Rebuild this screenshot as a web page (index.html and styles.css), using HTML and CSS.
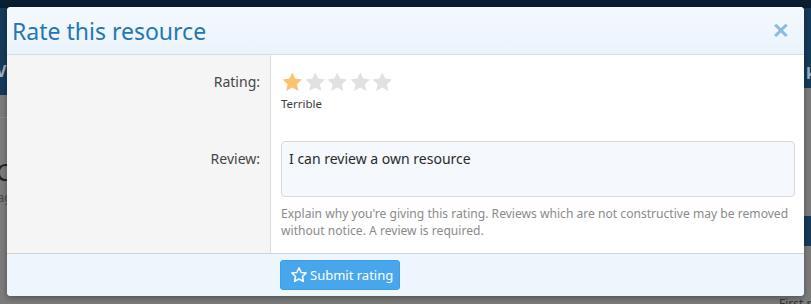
FILE: index.html
```html
<!DOCTYPE html>
<html lang="en">
<head>
<meta charset="utf-8">
<title>Rate this resource</title>
<link rel="stylesheet" href="styles.css">
</head>
<body>
<div class="backdrop">
  <div class="bg-left"><span class="bg-txt1">Vh</span><span class="bg-txt2">C</span><span class="bg-txt3">ag</span></div>
  <div class="bg-right"><span class="bg-k">k</span><span class="bg-first">First rel</span></div>
</div>
<div class="modal">
  <div class="modal-header">
    <h2 class="modal-title">Rate this resource</h2>
    <span class="modal-close">&#x2715;</span>
  </div>
  <div class="modal-body">
    <div class="row">
      <div class="label">Rating:</div>
      <div class="field">
        <div class="stars">
          <svg class="star on" viewBox="0 0 24 24"><path d="M12 1.5l3.1 6.6 7.3.9-5.4 5 1.5 7.2L12 17.7l-6.5 3.5 1.5-7.2-5.4-5 7.3-.9z"/></svg>
          <svg class="star" viewBox="0 0 24 24"><path d="M12 1.5l3.1 6.6 7.3.9-5.4 5 1.5 7.2L12 17.7l-6.5 3.5 1.5-7.2-5.4-5 7.3-.9z"/></svg>
          <svg class="star" viewBox="0 0 24 24"><path d="M12 1.5l3.1 6.6 7.3.9-5.4 5 1.5 7.2L12 17.7l-6.5 3.5 1.5-7.2-5.4-5 7.3-.9z"/></svg>
          <svg class="star" viewBox="0 0 24 24"><path d="M12 1.5l3.1 6.6 7.3.9-5.4 5 1.5 7.2L12 17.7l-6.5 3.5 1.5-7.2-5.4-5 7.3-.9z"/></svg>
          <svg class="star" viewBox="0 0 24 24"><path d="M12 1.5l3.1 6.6 7.3.9-5.4 5 1.5 7.2L12 17.7l-6.5 3.5 1.5-7.2-5.4-5 7.3-.9z"/></svg>
        </div>
        <div class="rating-text">Terrible</div>
      </div>
    </div>
    <div class="row row-review">
      <div class="label label-review">Review:</div>
      <div class="field">
        <div class="textarea">I can review a own resource</div>
        <div class="hint">Explain why you're giving this rating. Reviews which are not constructive may be removed without notice. A review is required.</div>
      </div>
    </div>
  </div>
  <div class="modal-footer">
    <div class="footer-spacer"></div>
    <button class="btn" type="button">
      <svg class="btn-icon" viewBox="0 0 24 24"><path d="M12 2.5l2.9 6.1 6.6.8-4.9 4.6 1.3 6.6L12 17.3l-5.9 3.3 1.3-6.6-4.9-4.6 6.6-.8z"/></svg>
      <span>Submit rating</span>
    </button>
  </div>
</div>
</body>
</html>
```

FILE: styles.css
```css
* { box-sizing: border-box; }
html, body { margin: 0; padding: 0; }
body {
  width: 811px;
  height: 304px;
  overflow: hidden;
  font-family: "Noto Sans", "Open Sans", sans-serif;
  position: relative;
  background: #7b7b7b;
}
.backdrop {
  position: absolute;
  inset: 0;
  background:
    linear-gradient(#0a1e31 0, #0a1e31 8px, #163a5a 8px, #163a5a 95px, #7c7c7c 95px, #7c7c7c 117px, #8a8a8a 117px, #8a8a8a 118px, #7c7c7c 118px);
}
.bg-left, .bg-right { position: absolute; top: 0; height: 304px; }
.bg-left { left: 0; width: 7px; }
.bg-right {
  right: 0; width: 7px;
  background: linear-gradient(#0a1e31 0, #0a1e31 8px, #163a5a 8px, #163a5a 88px, #7c7c7c 88px, #7c7c7c 216px, #163a5a 216px, #163a5a 246px, #7c7c7c 246px);
}
.bg-left span, .bg-right span {
  position: absolute;
  color: #2d2d2d;
  font-size: 16px;
  white-space: nowrap;
}
.bg-txt1 { top: 60px; left: -4px; color: #9fb2c4 !important; font-weight: 700; }
.bg-txt2 { top: 155px; left: -4px; font-size: 24px !important; color: #222 !important; }
.bg-txt3 { top: 188px; left: -3px; color: #4a4a4a !important; font-size: 13px !important; }
.bg-k { top: 62px; left: 2px; color: #9fb2c4 !important; font-weight: 700; }
.bg-first { top: 295px; left: -25px; color: #333 !important; font-size: 12px !important; }

.modal {
  position: absolute;
  top: 7px;
  left: 7px;
  width: 797px;
  height: 289px;
  border-radius: 4px;
  overflow: hidden;
  background: #fff;
  box-shadow: 0 2px 6px rgba(0,0,0,0.35);
  display: flex;
  flex-direction: column;
}
.modal-header {
  height: 48px;
  flex: none;
  display: flex;
  align-items: center;
  justify-content: space-between;
  padding: 0 14px 0 5px;
  background: linear-gradient(#f5f9fe, #eaf3fc);
  border-bottom: 1px solid #d5dde6;
}
.modal-title {
  margin: 0;
  font-weight: 400;
  font-size: 23px;
  color: #2577b1;
  letter-spacing: 0;
}
.modal-close {
  color: #8cb9de;
  font-size: 21px;
  font-weight: 700;
  line-height: 1;
  margin-top: -1px;
}
.modal-body {
  flex: 1;
  display: flex;
  flex-direction: column;
  background: linear-gradient(to right, #f5f5f5 0, #f5f5f5 263px, #dcdcdc 263px, #dcdcdc 264px, #fff 264px);
  border-bottom: 1px solid #d3d3d3;
  padding-top: 15px;
}
.row { display: flex; }
.label {
  width: 264px;
  flex: none;
  text-align: right;
  padding-right: 11px;
  font-size: 14px;
  color: #464646;
  padding-top: 2px;
}
.field {
  flex: 1;
  padding: 0 9px 0 10px;
}
.stars { display: flex; gap: 0; height: 24px; align-items: center; }
.star { width: 22.5px; height: 22.5px; fill: #e1e1e1; }
.star.on { fill: #f9c374; }
.rating-text { font-size: 11.5px; color: #3c3c3c; margin-top: 2px; }
.row-review { margin-top: 30px; }
.label-review { padding-top: 8px; }
.textarea {
  height: 56px;
  border: 1px solid #d8d8d8;
  border-radius: 4px;
  background: #f5f9fd;
  padding: 7px 7px;
  font-size: 14px;
  color: #2a2a2a;
}
.hint {
  margin-top: 8px;
  font-size: 12.1px;
  line-height: 17px;
  color: #8a8a8a;
}
.modal-footer {
  height: 42px;
  flex: none;
  display: flex;
  align-items: center;
  background: #edf5fd;
}
.footer-spacer { width: 273px; flex: none; }
.btn {
  height: 30px;
  width: 120px;
  border: 1px solid #3e9ee3;
  border-radius: 3px;
  background: #48a7ec;
  color: #fff;
  font-family: "Noto Sans", "Open Sans", sans-serif;
  font-size: 13px;
  display: flex;
  align-items: center;
  gap: 2px;
  padding: 0 0 0 9px;
  margin-top: -1px;
}
.btn-icon {
  width: 18px;
  height: 18px;
  fill: none;
  stroke: #fff;
  stroke-width: 2;
  stroke-linejoin: round;
}
```
